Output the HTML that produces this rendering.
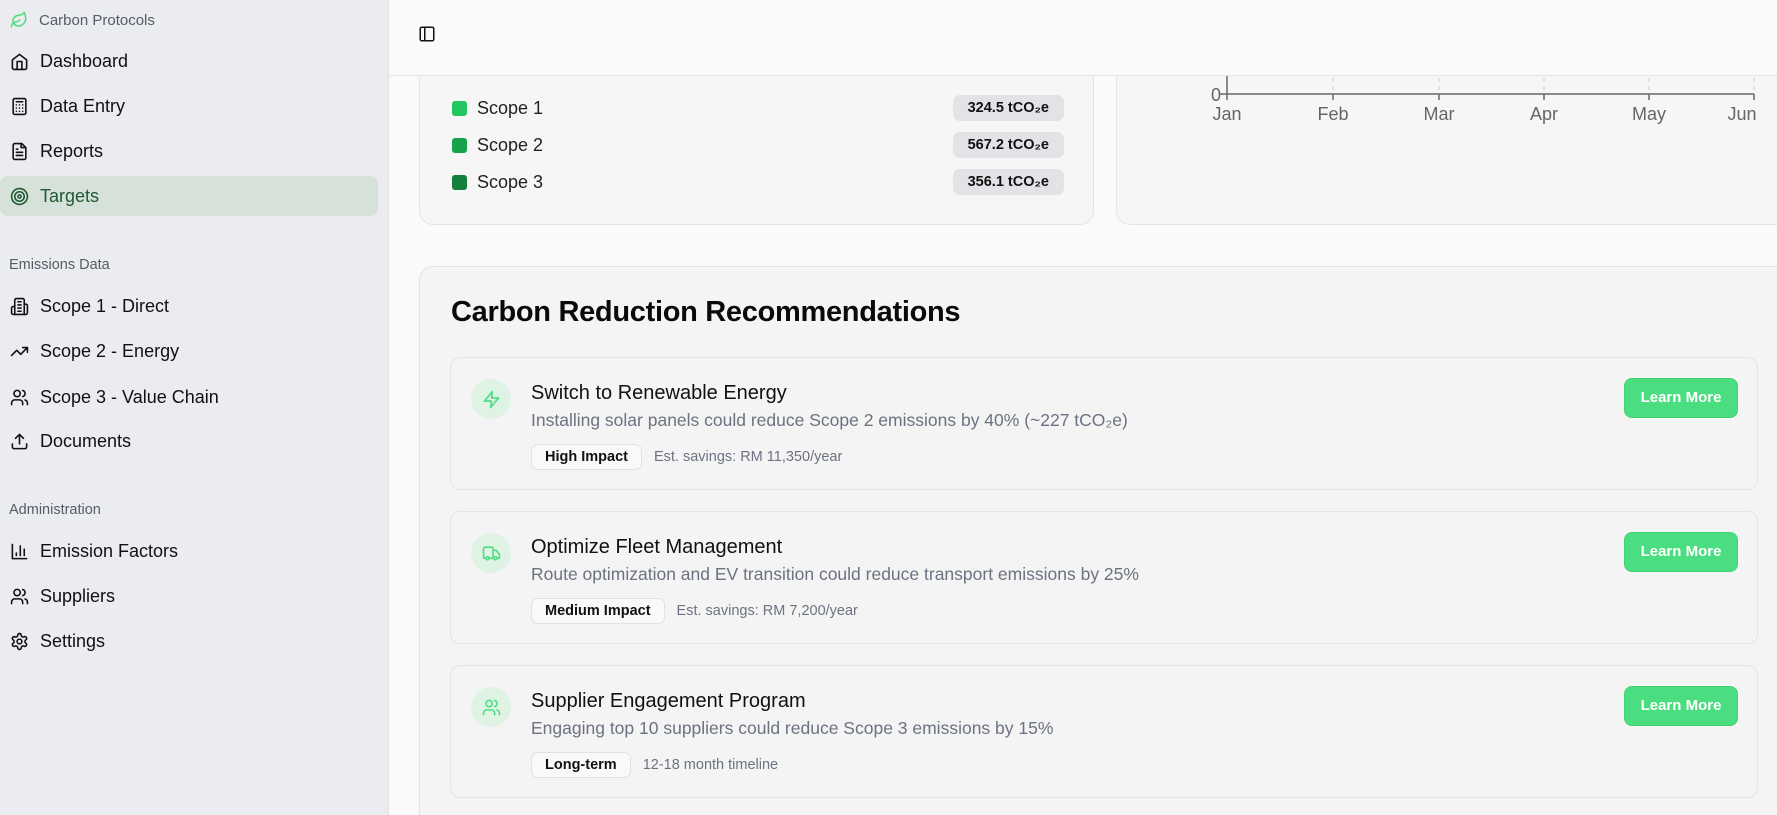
<!DOCTYPE html>
<html><head><meta charset="utf-8"><style>
*{box-sizing:border-box;margin:0;padding:0}
html{width:1777px;height:815px;overflow:hidden}
body{width:1777px;height:815px;overflow:hidden;background:#fafafa;font-family:"Liberation Sans",sans-serif;position:relative;color:#0a0a0a}
.abs{position:absolute}
#sb{left:0;top:0;width:389px;height:815px;background:#ebecf0;border-right:1px solid #e2e2e6}
.nav{position:absolute;left:0;width:378px;height:40px;display:flex;align-items:center;padding-left:10px;font-size:18px;color:#111}
.nav svg{width:19px;height:19px;margin-right:11px;fill:none;stroke:#111;stroke-width:2;stroke-linecap:round;stroke-linejoin:round}
.lbl{position:absolute;left:9px;font-size:14.5px;color:#555c66}
#hdr{left:389px;top:0;right:0;height:76px;background:#fafafa;border-bottom:1px solid #e4e4e7}
.card{position:absolute;background:#f6f6f6;border:1px solid #e4e4e7;border-radius:14px}
.row{position:absolute;left:32px;display:flex;align-items:center;font-size:18px;color:#222}
.sq{width:15px;height:15px;border-radius:3px;margin-right:10px}
.bdg{position:absolute;right:29px;height:26px;background:#e2e3e7;border-radius:7px;font-size:14.5px;font-weight:bold;padding:0 15px;line-height:26px;color:#111}
.rc{position:absolute;left:450px;width:1308px;height:133px;background:#f4f4f4;border:1px solid #e4e4e7;border-radius:10px}
.ic{position:absolute;left:20px;top:21px;width:40px;height:40px;border-radius:50%;background:#dff3e5;display:flex;align-items:center;justify-content:center}
.ic svg{width:19px;height:19px;fill:none;stroke:#4ade80;stroke-width:2;stroke-linecap:round;stroke-linejoin:round}
.t{position:absolute;left:80px;top:24px;font-size:20px;color:#111}
.d{position:absolute;left:80px;top:52px;font-size:17.5px;color:#6b7280}
.meta{position:absolute;left:80px;top:86px;display:flex;align-items:center}
.tag{height:26px;border:1px solid #e2e2e6;background:#f9f9f9;border-radius:7px;font-size:14.5px;font-weight:bold;padding:0 13px;line-height:24px;color:#111;margin-right:12px}
.est{font-size:14.5px;color:#6b7280}
.btn{position:absolute;left:1173px;top:20px;width:114px;height:40px;background:#4ade80;border:1px solid #3fd373;border-radius:8px;color:#fff;font-weight:bold;font-size:15px;text-align:center;line-height:38px}
.ax{font-size:18px;fill:#666;font-family:"Liberation Sans",sans-serif}
</style></head><body>
<div id="sb" class="abs">
 <div class="abs" style="left:10px;top:11px;display:flex;align-items:center;font-size:15px;color:#555c66">
  <svg width="18" height="18" viewBox="0 0 24 24" fill="none" stroke="#4ade80" stroke-width="2" stroke-linecap="round" stroke-linejoin="round" style="margin-right:11px"><path d="M11 20A7 7 0 0 1 9.8 6.1C15.5 5 17 4.48 19 2c1 2 2 4.18 2 8 0 5.5-4.78 10-10 10Z"/><path d="M2 21c0-3 1.85-5.36 5.08-6C9.5 14.52 12 13 13 12"/></svg>Carbon Protocols</div>
 <div class="nav" style="top:41px"><svg viewBox="0 0 24 24"><path d="M3 10l9-7 9 7v10a2 2 0 0 1-2 2H5a2 2 0 0 1-2-2z"/><path d="M9 22V12h6v10"/></svg>Dashboard</div>
 <div class="nav" style="top:86px"><svg viewBox="0 0 24 24"><rect x="4" y="2" width="16" height="20" rx="2"/><path d="M8 6h8M8 10h.01M12 10h.01M16 10h.01M8 14h.01M12 14h.01M16 14h.01M8 18h.01M12 18h.01M16 18h.01"/></svg>Data Entry</div>
 <div class="nav" style="top:131px"><svg viewBox="0 0 24 24"><path d="M15 2H6a2 2 0 0 0-2 2v16a2 2 0 0 0 2 2h12a2 2 0 0 0 2-2V7z"/><path d="M14 2v5h5M16 13H8M16 17H8M10 9H8"/></svg>Reports</div>
 <div class="nav" style="top:176px;background:#d6e1d9;border-radius:8px;color:#1f5a33"><svg viewBox="0 0 24 24" style="stroke:#1f5a33"><circle cx="12" cy="12" r="10"/><circle cx="12" cy="12" r="6"/><circle cx="12" cy="12" r="2"/></svg>Targets</div>
 <div class="lbl" style="top:257px">Emissions Data</div>
 <div class="nav" style="top:286px"><svg viewBox="0 0 24 24"><path d="M6 22V4a2 2 0 0 1 2-2h8a2 2 0 0 1 2 2v18z"/><path d="M6 12H4a2 2 0 0 0-2 2v6a2 2 0 0 0 2 2h2M18 9h2a2 2 0 0 1 2 2v9a2 2 0 0 1-2 2h-2M10 6h4M10 10h4M10 14h4M10 18h4"/></svg>Scope 1 - Direct</div>
 <div class="nav" style="top:331px"><svg viewBox="0 0 24 24"><path d="M22 7l-8.5 8.5-5-5L2 17"/><path d="M16 7h6v6"/></svg>Scope 2 - Energy</div>
 <div class="nav" style="top:377px"><svg viewBox="0 0 24 24"><path d="M16 21v-2a4 4 0 0 0-4-4H6a4 4 0 0 0-4 4v2"/><circle cx="9" cy="7" r="4"/><path d="M22 21v-2a4 4 0 0 0-3-3.87M16 3.13a4 4 0 0 1 0 7.75"/></svg>Scope 3 - Value Chain</div>
 <div class="nav" style="top:421px"><svg viewBox="0 0 24 24"><path d="M21 15v4a2 2 0 0 1-2 2H5a2 2 0 0 1-2-2v-4"/><path d="M17 8l-5-5-5 5M12 3v12"/></svg>Documents</div>
 <div class="lbl" style="top:502px">Administration</div>
 <div class="nav" style="top:531px"><svg viewBox="0 0 24 24"><path d="M3 3v18h18M18 17V9M13 17V5M8 17v-3"/></svg>Emission Factors</div>
 <div class="nav" style="top:576px"><svg viewBox="0 0 24 24"><path d="M16 21v-2a4 4 0 0 0-4-4H6a4 4 0 0 0-4 4v2"/><circle cx="9" cy="7" r="4"/><path d="M22 21v-2a4 4 0 0 0-3-3.87M16 3.13a4 4 0 0 1 0 7.75"/></svg>Suppliers</div>
 <div class="nav" style="top:621px"><svg viewBox="0 0 24 24"><path d="M12.22 2h-.44a2 2 0 0 0-2 2v.18a2 2 0 0 1-1 1.73l-.43.25a2 2 0 0 1-2 0l-.15-.08a2 2 0 0 0-2.73.73l-.22.38a2 2 0 0 0 .73 2.73l.15.1a2 2 0 0 1 1 1.72v.51a2 2 0 0 1-1 1.74l-.15.09a2 2 0 0 0-.73 2.73l.22.38a2 2 0 0 0 2.73.73l.15-.08a2 2 0 0 1 2 0l.43.25a2 2 0 0 1 1 1.73V20a2 2 0 0 0 2 2h.44a2 2 0 0 0 2-2v-.18a2 2 0 0 1 1-1.73l.43-.25a2 2 0 0 1 2 0l.15.08a2 2 0 0 0 2.73-.73l.22-.39a2 2 0 0 0-.73-2.73l-.15-.08a2 2 0 0 1-1-1.74v-.5a2 2 0 0 1 1-1.74l.15-.09a2 2 0 0 0 .73-2.73l-.22-.38a2 2 0 0 0-2.73-.73l-.15.08a2 2 0 0 1-2 0l-.43-.25a2 2 0 0 1-1-1.73V4a2 2 0 0 0-2-2z"/><circle cx="12" cy="12" r="3"/></svg>Settings</div>
</div>

<div class="card" style="left:419px;top:40px;width:675px;height:185px;border-top:none;border-radius:0 0 14px 14px">
 <div class="row" style="top:58px"><div class="sq" style="background:#22c55e"></div>Scope 1</div>
 <div class="bdg" style="top:55px">324.5 tCO₂e</div>
 <div class="row" style="top:95px"><div class="sq" style="background:#16a34a"></div>Scope 2</div>
 <div class="bdg" style="top:92px">567.2 tCO₂e</div>
 <div class="row" style="top:132px"><div class="sq" style="background:#15803d"></div>Scope 3</div>
 <div class="bdg" style="top:129px">356.1 tCO₂e</div>
</div>
<div class="card" style="left:1116px;top:40px;width:700px;height:185px;border-top:none;border-radius:0 0 14px 14px"></div>
<svg class="abs" style="left:0;top:0" width="1777" height="130">
 <g stroke="#ccc" stroke-dasharray="4 4"><path d="M1333 78V94M1439 78V94M1544 78V94M1649 78V94M1754 78V94"/></g>
 <path d="M1227 76V100M1220 94H1754M1333 94V100M1439 94V100M1544 94V100M1649 94V100M1754 94V100" stroke="#666" stroke-width="1.5" fill="none"/>
 <text class="ax" x="1211" y="101">0</text>
 <text class="ax" x="1227" y="120" text-anchor="middle">Jan</text>
 <text class="ax" x="1333" y="120" text-anchor="middle">Feb</text>
 <text class="ax" x="1439" y="120" text-anchor="middle">Mar</text>
 <text class="ax" x="1544" y="120" text-anchor="middle">Apr</text>
 <text class="ax" x="1649" y="120" text-anchor="middle">May</text>
 <text class="ax" x="1742" y="120" text-anchor="middle">Jun</text>
</svg>

<div id="hdr" class="abs">
 <svg class="abs" style="left:29px;top:25px" width="18" height="18" viewBox="0 0 24 24" fill="none" stroke="#111" stroke-width="2" stroke-linecap="round" stroke-linejoin="round"><rect x="3" y="3" width="18" height="18" rx="2"/><path d="M9 3v18"/></svg>
</div>

<div class="card" style="left:419px;top:266px;width:1400px;height:580px;background:#f4f4f4">
 <div class="abs" style="left:31px;top:29px;font-size:29px;font-weight:bold;color:#0a0a0a;letter-spacing:-0.3px">Carbon Reduction Recommendations</div>
</div>

<div class="rc" style="top:357px">
 <div class="ic"><svg viewBox="0 0 24 24"><path d="M13 2L3 14h9l-1 8 10-12h-9l1-8z"/></svg></div>
 <div class="t">Switch to Renewable Energy</div>
 <div class="d">Installing solar panels could reduce Scope 2 emissions by 40% (~227 tCO₂e)</div>
 <div class="meta"><div class="tag">High Impact</div><div class="est">Est. savings: RM 11,350/year</div></div>
 <div class="btn">Learn More</div>
</div>
<div class="rc" style="top:511px">
 <div class="ic"><svg viewBox="0 0 24 24"><path d="M14 18V6a2 2 0 0 0-2-2H4a2 2 0 0 0-2 2v11a1 1 0 0 0 1 1h2M15 18H9M19 18h2a1 1 0 0 0 1-1v-3.65a1 1 0 0 0-.22-.62l-3.48-4.35A1 1 0 0 0 17.52 8H14"/><circle cx="17" cy="18" r="2"/><circle cx="7" cy="18" r="2"/></svg></div>
 <div class="t">Optimize Fleet Management</div>
 <div class="d">Route optimization and EV transition could reduce transport emissions by 25%</div>
 <div class="meta"><div class="tag">Medium Impact</div><div class="est">Est. savings: RM 7,200/year</div></div>
 <div class="btn">Learn More</div>
</div>
<div class="rc" style="top:665px">
 <div class="ic"><svg viewBox="0 0 24 24"><path d="M16 21v-2a4 4 0 0 0-4-4H6a4 4 0 0 0-4 4v2"/><circle cx="9" cy="7" r="4"/><path d="M22 21v-2a4 4 0 0 0-3-3.87M16 3.13a4 4 0 0 1 0 7.75"/></svg></div>
 <div class="t">Supplier Engagement Program</div>
 <div class="d">Engaging top 10 suppliers could reduce Scope 3 emissions by 15%</div>
 <div class="meta"><div class="tag">Long-term</div><div class="est">12-18 month timeline</div></div>
 <div class="btn">Learn More</div>
</div>
</body></html>
